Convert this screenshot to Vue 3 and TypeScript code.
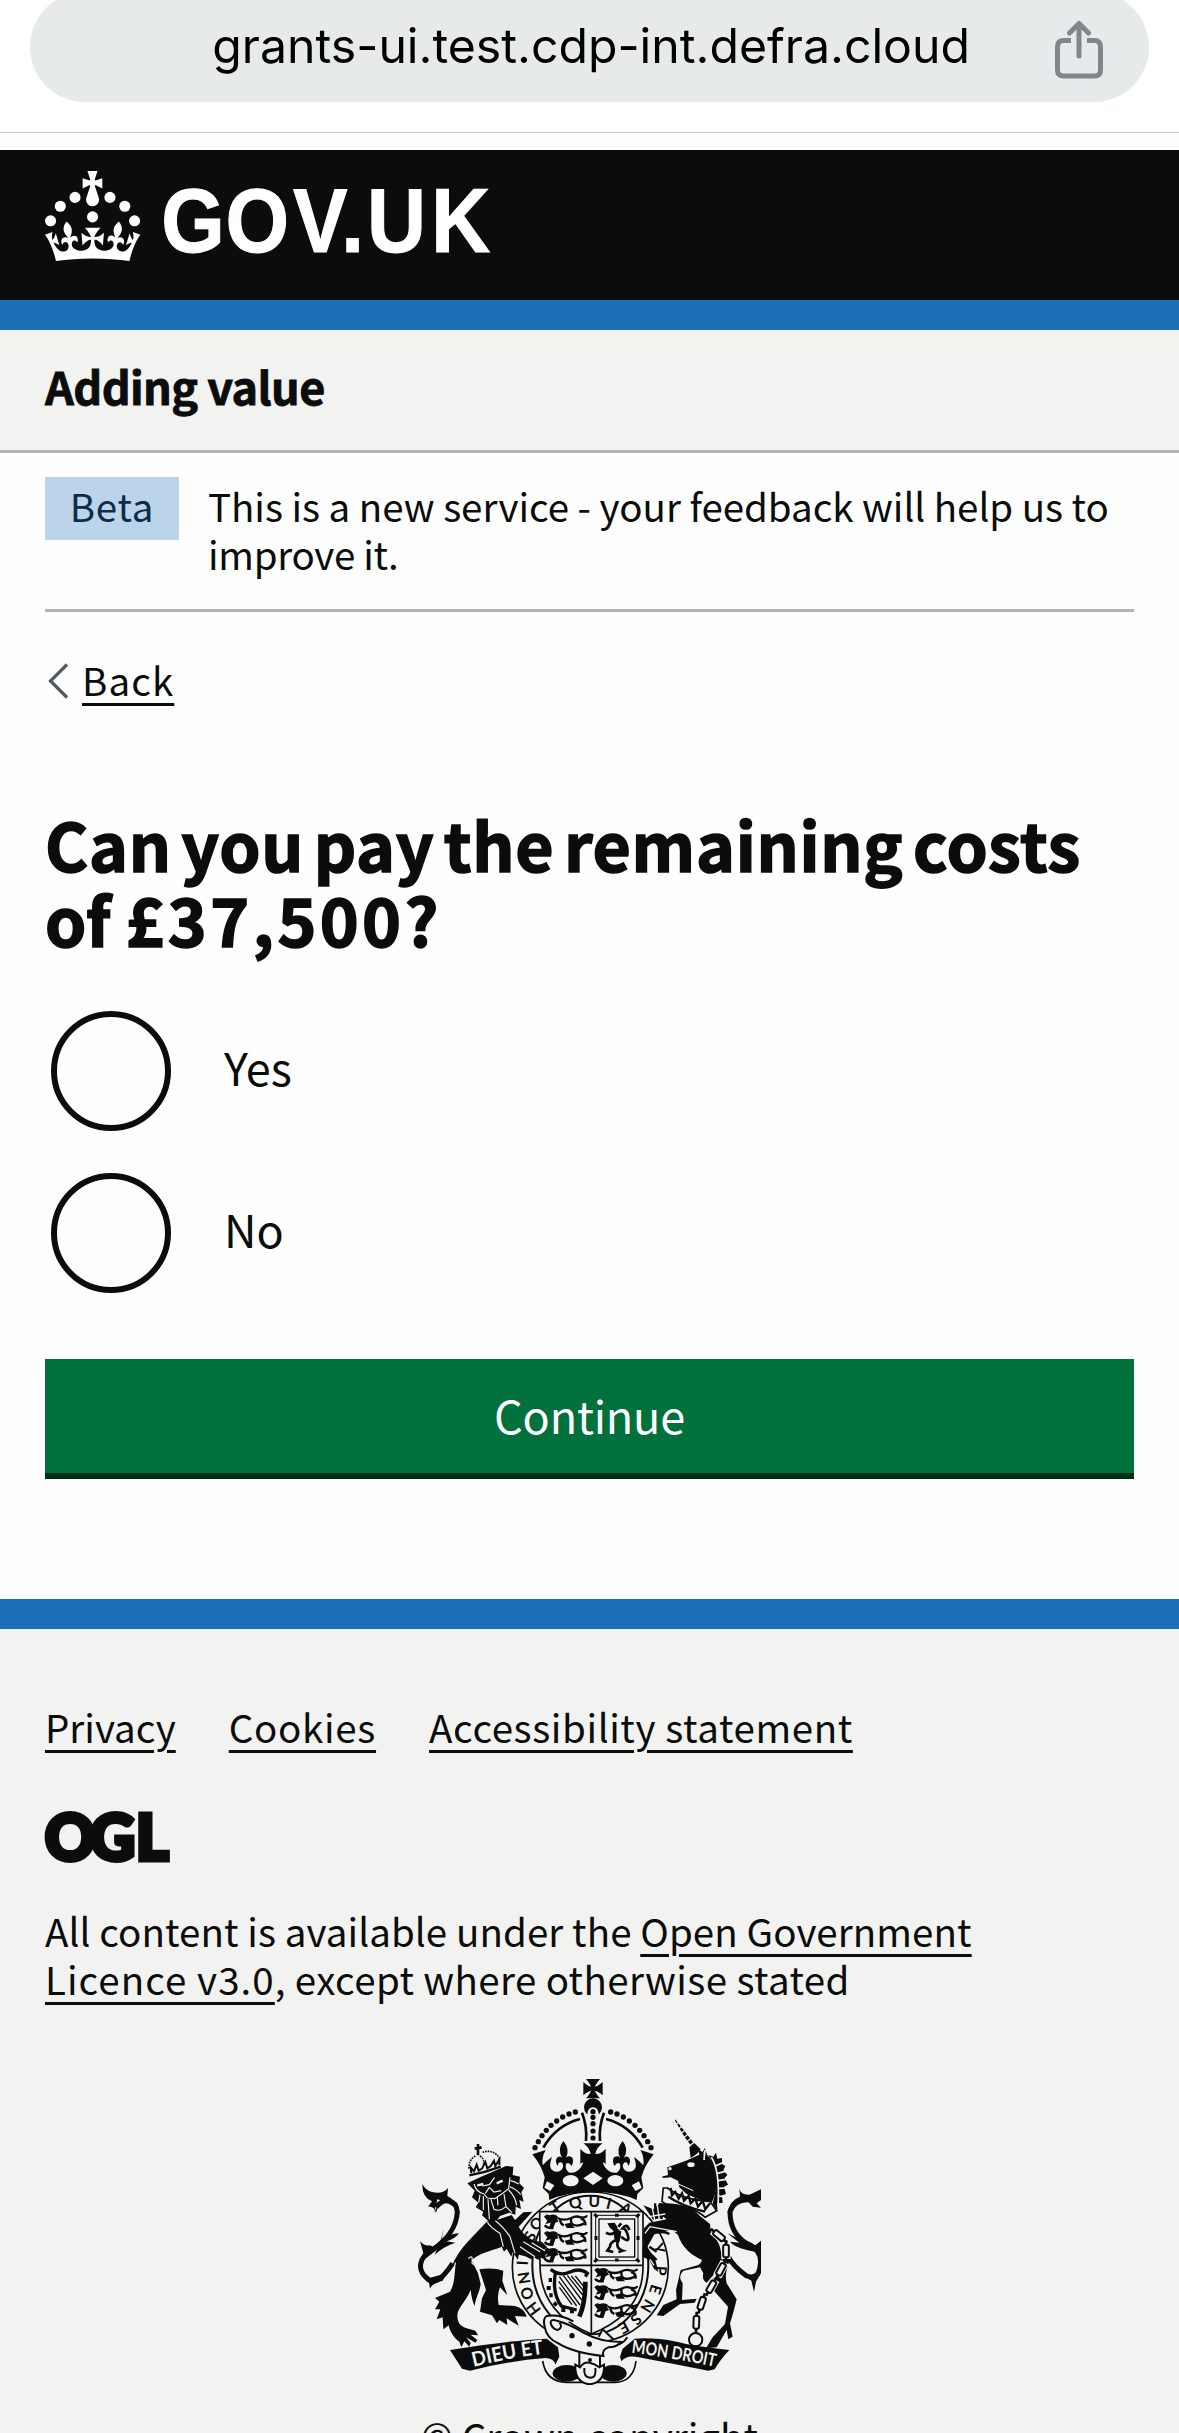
<script setup lang="ts">
interface Glyph { c: string; x: number; y: number; r: number }

const options: string[] = ['Yes', 'No']
const footerLinks = [
  { label: 'Privacy', cls: 'l1' },
  { label: 'Cookies', cls: 'l2' },
  { label: 'Accessibility statement', cls: 'l3' },
]

// Letters of the garter motto that stay visible around the shield
const motto: Glyph[] = [
  { c: 'H', x: 400, y: 746, r: -127 },
  { c: 'O', x: 381, y: 700, r: -111 },
  { c: 'N', x: 372, y: 654, r: -99 },
  { c: 'I', x: 367, y: 609, r: -87 },
  { c: 'S', x: 390, y: 529, r: -62 },
  { c: 'O', x: 409, y: 491, r: -54 },
  { c: 'T', x: 465, y: 441, r: -33 },
  { c: 'Q', x: 526, y: 428, r: -12 },
  { c: 'U', x: 583, y: 424, r: 2 },
  { c: 'I', x: 627, y: 430, r: 15 },
  { c: 'A', x: 678, y: 446, r: 30 },
  { c: 'Y', x: 776, y: 566, r: 72 },
  { c: 'P', x: 783, y: 632, r: 92 },
  { c: 'E', x: 767, y: 688, r: 107 },
  { c: 'N', x: 743, y: 738, r: 121 },
  { c: 'S', x: 708, y: 778, r: 138 },
  { c: 'E', x: 672, y: 803, r: 152 },
]
const pearls = [[526, 156], [507, 162], [488, 171], [470, 183], [453, 196], [439, 211], [426, 227], [415, 245], [405, 263]]
const lionRows = [[430, 462], [430, 512], [430, 562], [581, 622], [581, 674], [581, 728]]
const chain = [[957, 527, -50], [978, 573, 0], [963, 628, 28], [934, 680, 30], [905, 730, 18], [889, 787, 2]]
</script>

<template>
  <div class="page">
    <div class="browser">
      <div class="pill">
        <span class="url">grants-ui.test.cdp-int.defra.cloud</span>
        <svg class="share" viewBox="0 0 50 60" width="50" height="60" fill="none" stroke="#80868b" stroke-width="5" stroke-linecap="round" stroke-linejoin="round">
          <path d="M17 20.500H9.500Q3.500 20.500 3.500 27V50Q3.500 56 9.500 56H40.500Q46.500 56 46.500 50V27Q46.500 20.500 40.500 20.500H33" stroke-linecap="butt" />
          <path d="M25 36V4M15.500 13 25 3.500 34.500 13" />
        </svg>
      </div>
    </div>

    <header class="header">
      <svg viewBox="0 0 324 60" width="486" height="90" fill="#fff">
        <circle cx="20" cy="17.600" r="3.700" /><circle cx="10.200" cy="23.500" r="3.700" /><circle cx="3.700" cy="33.200" r="3.700" />
        <circle cx="31.700" cy="30.600" r="3.700" /><circle cx="43.300" cy="17.600" r="3.700" /><circle cx="53.200" cy="23.500" r="3.700" /><circle cx="59.700" cy="33.200" r="3.700" />
        <path d="M33.1,9.8c.2-.1.3-.3.5-.5l4.6,2.4v-6.8l-4.6,1.5c-.1-.2-.3-.3-.5-.5l1.9-5.9h-6.7l1.9,5.9c-.2.1-.3.3-.5.5l-4.6-1.5v6.8l4.6-2.4c.1.2.3.3.5.5l-2.6,8c-.9,2.8,1.2,5.7,4.1,5.7h0c3,0,5.1-2.9,4.1-5.7l-2.6-8ZM37,37.9s-3.4,3.8-4.1,6.1c2.2,0,4.2-.5,6.4-2.8l-.7,8.5c-2-2.8-4.4-4.1-5.7-3.8.1,3.1.5,6.7,5.8,7.2,3.7.3,6.7-1.5,7-3.8.4-2.6-2-4.3-3.7-1.6-1.4-4.5,2.4-6.1,4.9-3.2-1.9-4.5-1.8-7.7,2.4-10.9,3,4,2.6,7.3-1.2,11.1,2.4-1.3,6.2,0,4,4.6-1.2-2.8-3.7-2.2-4.2.2-.3,1.7.7,3.7,3,4.2,1.9.3,4.7-.9,7-5.9-1.3,0-2.4.7-3.9,1.7l2.4-8c.6,2.3,1.4,3.7,2.2,4.5.6-1.6.5-2.8,0-5.3l5,1.8c-2.6,3.6-5.2,8.7-7.3,17.5-7.4-1.1-15.7-1.7-24.5-1.7h0c-8.8,0-17.1.6-24.5,1.7-2.1-8.9-4.7-13.9-7.3-17.5l5-1.8c-.5,2.5-.6,3.7,0,5.3.8-.8,1.6-2.3,2.2-4.5l2.4,8c-1.5-1-2.6-1.7-3.9-1.7,2.3,5,5.2,6.2,7,5.9,2.3-.4,3.3-2.4,3-4.2-.5-2.4-3-3.1-4.2-.2-2.2-4.6,1.6-6,4-4.6-3.7-3.7-4.2-7.1-1.2-11.1,4.2,3.2,4.3,6.4,2.4,10.9,2.5-2.8,6.3-1.3,4.9,3.2-1.8-2.7-4.1-1-3.7,1.6.3,2.3,3.3,4.1,7,3.8,5.4-.5,5.7-4.2,5.8-7.2-1.3-.2-3.7,1-5.7,3.8l-.7-8.5c2.2,2.3,4.2,2.7,6.4,2.8-.7-2.3-4.1-6.1-4.1-6.1h10.600,0Z" />
        <text class="wordmark" transform="scale(.9 1)" y="54" x="86.200 133.700 183.700 219.500 238.500 286.200">GOV.UK</text>
      </svg>
    </header>

    <div class="service"><span>Adding value</span></div>

    <div class="wrap">
      <div class="phase">
        <strong class="tag">Beta</strong>
        <p><span class="p1">This is a new service - your feedback will help us to</span><br><span class="p2">improve it.</span></p>
      </div>

      <a class="back" href="#">
        <svg viewBox="0 0 22 36" width="22" height="36" fill="none" stroke="#505a5f" stroke-width="3.200"><path d="M20 1.500 3.500 18 20 34.500" /></svg>
        <span>Back</span>
      </a>

      <h1><span class="h1a">Can you pay the remaining costs</span><br><span>of <span class="sum">£37,500?</span></span></h1>

      <div class="radios">
        <label v-for="o in options" :key="o" class="radio"><i></i><span>{{ o }}</span></label>
      </div>

      <button class="button"><span>Continue</span></button>
    </div>

    <footer class="footer">
      <nav>
        <a v-for="l in footerLinks" :key="l.label" href="#" :class="l.cls">{{ l.label }}</a>
      </nav>
      <svg class="ogl" viewBox="0 0 124 52" width="124" height="52" fill="#0b0c0c">
        <text y="49" x="0 45 91">OGL</text>
      </svg>
      <p class="licence"><span class="c1">All content is available under the <a href="#">Open Government</a></span><br><span class="c2"><a class="v3" href="#">Licence v3.0</a>, except where otherwise stated</span></p>

      <svg class="arms" viewBox="54 57 1029 918" width="343" height="306" fill="#0b0c0c">
        <!-- garter -->
        <ellipse cx="571" cy="622" rx="234" ry="226" fill="#f2f2f0" stroke="#0b0c0c" stroke-width="5" />
        <ellipse cx="571" cy="615" rx="174" ry="208" fill="none" stroke="#0b0c0c" stroke-width="6" />
        <g class="motto">
          <text v-for="(g, i) in motto" :key="i" :transform="`translate(${g.x} ${g.y}) rotate(${g.r})`" dy=".36em">{{ g.c }}</text>
        </g>

        <!-- royal crown -->
        <path d="M558 57H600C592 66 586 76 585 80 590 80 600 74 608 66V106C600 98 590 93 585 92 586 97 592 106 600 115H558C566 106 572 97 573 92 568 93 558 98 550 106V66C558 74 568 80 573 80 572 76 566 66 558 57Z" />
        <circle cx="579" cy="142" r="27" />
        <path d="M562 250V166Q562 142 579 142T596 166V250Z" fill="#f2f2f0" />
        <circle v-for="y in [155, 172, 191, 213, 234]" :key="y" cx="579" :cy="y" r="7.800" />
        <g id="half-crown">
          <circle v-for="(p, i) in pearls" :key="i" :cx="p[0]" :cy="p[1]" r="8" />
          <path d="M430 263Q468 196 540 177M546 158Q562 200 558 243" fill="none" stroke="#0b0c0c" stroke-width="8" />
          <path d="M397 283 437 270Q424 292 428 316 438 304 456 290 446 318 454 328 468 342 484 330 494 318 486 308 474 304 474 318 462 304 472 292 482 286 487 294 470 268 490 243 512 268 497 294 502 284 516 292 524 304 514 318 506 304 498 312 494 330 508 338 536 342 550 308 546 306 541 312V266Q556 284 572 282 568 262 550 250H580V396Q500 396 448 420L446 402 428 384 434 352Q424 316 397 283Z" />
          <ellipse cx="512" cy="362" rx="24" ry="17" fill="#f2f2f0" />
          <path d="M441 364 463 376 451 393 433 383Z" fill="#f2f2f0" />
        </g>
        <use href="#half-crown" transform="translate(1158 0) scale(-1 1)" />
        <path d="M550 355 579 335 608 355 579 375Z" fill="#f2f2f0" />

        <!-- shield -->
        <path d="M419 455H729V620C729 710 680 780 574 822 470 780 421 710 420 616Z" fill="#f2f2f0" stroke="#0b0c0c" stroke-width="5" />
        <path d="M574 455V820M420 616H729" stroke="#0b0c0c" stroke-width="5" />
        <g v-for="(p, i) in lionRows" :key="i" :transform="`translate(${p[0]} ${p[1]})`">
          <path d="M2 8Q10-2 18 4 34-2 44 8L40 14 46 22 36 26 30 42 18 40 22 26 6 30 12 20Z" />
          <path d="M42 12Q62 22 84 12 98 4 112 10 130 12 130 4M50 18Q52 30 62 34M84 14Q80 28 92 33T124 28M112 14Q128 18 126 34M4 34Q12 44 30 42" fill="none" stroke="#0b0c0c" stroke-width="7" />
          <path d="M64 30 82 26 94 42 70 42Z" />
        </g>
        <g fill="none" stroke="#0b0c0c">
          <rect x="587" y="466" width="127" height="136" stroke-width="3" />
          <rect x="597" y="477" width="107" height="114" stroke-width="4" />
          <path d="M583 462 592 472M718 462 709 472M583 606 592 596M718 606 709 596M645 466H656M645 600H656M588 528V540M714 528V540" stroke-width="9" />
          <path d="M618 518Q632 528 646 516M645 505Q665 515 655 540T668 572L655 576M650 540Q630 546 630 560L622 572 640 576M664 530Q690 552 684 528T668 505Q680 488 688 510M655 500 664 490" stroke-width="8" />
        </g>
        <path d="M622 490 644 488 654 504 640 512 630 504ZM640 508 664 514 658 546 644 546Z" />
        <!-- harp -->
        <g fill="none" stroke="#0b0c0c">
          <path d="M452 628Q480 650 510 636T562 640L556 650M466 640Q456 700 484 738L530 750" stroke-width="10" />
          <path d="M556 665Q556 730 538 770" stroke-width="14" />
          <path d="M456 660H446M452 684H440M458 706H448M470 728 462 736M490 742V756M516 748V760" stroke-width="12" />
          <path d="M478 650 540 735M490 646 545 720M502 646 548 705M514 648 550 692M476 664 530 738M478 682 516 734M526 648 550 678" stroke-width="4" />
        </g>

        <!-- lion supporter -->
        <path d="M158 610C120 668 96 672 80 654 50 628 58 592 94 572 140 540 170 505 172 455 168 416 130 412 108 442" fill="none" stroke="#0b0c0c" stroke-width="15" />
        <path d="M67 373Q78 392 96 396 128 404 144 384L142 408Q165 418 176 450L160 440Q120 410 108 458 102 438 84 440L96 424Q66 412 67 373ZM102 460Q112 430 132 424L112 418ZM124 540Q150 520 177 520 166 536 140 544L166 548Q130 560 104 584L122 540 132 505ZM60 543Q74 560 90 556L112 568 84 590 58 610 70 580ZM85 655 90 686Q98 668 128 662L140 640Z" />
        <path d="M262 484C225 525 175 565 155 620L168 605C162 650 165 670 150 695L105 714 118 725 105 748 121 748 110 778 128 772 130 808 146 796C150 815 162 835 178 845L184 862 193 844 208 860 212 848 198 832 226 848 232 840 212 824 234 826 226 812 200 805C182 798 172 790 172 765 175 740 195 730 212 690 214 710 218 726 224 738 228 710 238 700 242 672L234 640 215 600 226 592C250 575 285 570 305 560L312 575 320 566 334 590 338 576 354 600 356 584Q380 588 394 598L400 590 415 600 420 592 438 600 436 586 444 578 430 570 442 562 425 545C400 545 372 530 356 500L397 455 370 457 345 480 335 465 290 480Z" />
        <path d="M238 628Q280 622 310 632L307 662 322 706 300 682Q290 705 296 735L345 738Q372 744 380 770L345 768 356 797 320 775 322 795 298 780 291 790 276 766 240 755 246 715 258 690Z" />
        <path d="M202 370 240 352 318 318 340 320 338 345 360 350 358 370 372 384 364 397 371 425 358 420 363 447 347 440 346 464 328 458 300 468 285 490 264 482 246 466 250 455 227 442 235 428 216 412 224 392Z" />
        <g fill="none" stroke="#f2f2f0" stroke-width="3.500">
          <path d="M222 372Q228 396 252 402L262 414 284 416 308 400 326 386 330 352M268 382 256 400M268 382 282 396 304 392M272 416 282 448Q300 456 318 440L312 402M292 412 294 436M240 404 236 428M250 408 250 450M264 418 268 478M326 390Q346 410 350 436M330 380Q350 388 362 404M332 362Q346 366 356 372M318 440 336 458M246 378 268 374 284 352M286 482Q310 500 330 530L345 580M262 486Q270 502 300 520L310 560M205 596Q220 580 216 610L236 625M370 545 420 575M360 560 405 590M395 548 435 572" />
          <path d="M232 376 250 372M290 370 308 362" stroke-width="7" />
        </g>
        <g fill="none" stroke="#0b0c0c">
          <path d="M208 346Q255 338 302 320" stroke-width="7" />
          <path d="M234 252V286M224 266 245 262" stroke-width="8" />
          <path d="M207 326Q205 298 228 287M300 296Q280 266 248 277M240 288Q255 298 250 316" stroke-width="5" stroke-dasharray="5 3" />
          <path d="M214 340 212 322 222 334 230 314 236 332 246 326 256 306 262 325 272 318 282 302 286 318 298 298V316" stroke-width="6" />
        </g>

        <!-- unicorn supporter -->
        <path d="M822 182 886 264" fill="none" stroke="#0b0c0c" stroke-width="11" stroke-dasharray="11 4" />
        <path d="M816 180 824 180 872 264 858 264Z" fill="#f2f2f0" />
        <path d="M785 350 804 345 802 322 822 315 858 302 898 284 894 268 908 276 914 264 922 286C952 315 958 390 935 428L910 424 860 402 838 382 834 362 812 352 790 354ZM868 262 884 250 902 268 890 282 872 294Z" />
        <path d="M925 285 940 290 948 278 952 296 966 294 966 312 976 318 970 330 982 345 974 354 984 374 972 380 978 402 966 406 968 428 952 430 952 455 938 430Q962 350 925 285Z" />
        <path d="M934 292Q960 330 954 440M946 318 968 308M952 340 976 334M954 362 978 358M954 385 978 384M952 408 972 410M915 270 912 300" fill="none" stroke="#f2f2f0" stroke-width="5" />
        <ellipse cx="873" cy="314" rx="11" ry="7" fill="#f2f2f0" /><circle cx="810" cy="326" r="5" fill="#f2f2f0" />
        <path d="M912 276 914 300M835 372 880 392" fill="none" stroke="#f2f2f0" stroke-width="3" />
        <path d="M790 384 802 384Q850 420 930 424L950 452 916 472Q880 440 800 434L786 424Z" fill="#f2f2f0" stroke="#0b0c0c" stroke-width="5" />
        <path d="M812 384 816 406 826 396 836 416 846 400 852 422 866 408 872 430 886 416 894 440 908 422 916 448 930 430M805 410Q850 440 915 455" fill="none" stroke="#0b0c0c" stroke-width="7" />
        <path d="M730 436 760 448 780 430Q860 425 900 468L930 492Q930 520 950 540 964 560 966 600L945 640 920 668Q905 660 910 640L900 622 850 632Q832 650 848 670L846 720 890 716 884 728 840 732 790 768 770 766 790 735 830 718 828 690 842 630 895 615Q905 608 906 600 850 575 834 525L816 510 765 520 742 560 766 600 775 636 762 626 748 600 728 590 732 505 748 488 800 478 790 470 760 480Z" />
        <path d="M990 600Q972 640 980 670L1010 718Q1000 760 990 790L998 830 985 838 980 810 950 862 918 865 938 832 975 792 984 740 940 690 925 668 960 640 970 585Z" />
        <path d="M985 590Q1000 620 1040 648 1075 660 1080 620 1090 570 1040 550 990 520 990 455 1005 415 1052 420" fill="none" stroke="#0b0c0c" stroke-width="15" />
        <path d="M1018 384Q1020 405 1048 404L1083 388V420L1070 430 1083 443 1058 440 1040 420Q1000 430 982 460 990 420 1020 410ZM982 520 1030 542 1060 560 1083 542V580L1040 570Q1000 560 990 545L1018 548ZM1020 640 1054 662 1062 696 1068 665 1083 640 1060 650Z" />
        <path d="M748 560 770 575M750 580 770 600M752 522Q790 510 808 522M765 430 768 470 788 474M780 430V456M762 456 792 452" fill="none" stroke="#0b0c0c" stroke-width="7" />
        <path d="M756 440 764 480M772 436 778 478M746 470 796 462M735 520 750 500 830 515M750 598 762 616" fill="none" stroke="#f2f2f0" stroke-width="4" />
        <g fill="#f2f2f0" stroke="#0b0c0c" stroke-width="6">
          <g v-for="(k, i) in chain" :key="i" :transform="`translate(${k[0]} ${k[1]}) rotate(${k[2]})`">
            <path d="M-14-24H14V24H-14ZM-3-30H3V32H-3Z" stroke="none" />
            <path d="M0-32V-14M0 14V32" stroke-width="8" />
            <rect x="-8.500" y="-19" width="17" height="38" rx="6" />
          </g>
          <circle cx="887" cy="839" r="20" />
        </g>

        <!-- motto ribbon -->
        <path d="M150 870Q320 842 440 836L474 862 478 890 466 914Q462 894 436 894 330 902 210 932L186 926Z" />
        <path d="M988 870Q880 858 830 845 760 832 704 836L668 866 660 890 664 904Q680 884 716 892 820 912 925 932L944 928Q960 900 988 870Z" />
        <path d="M428 903Q438 966 500 967H645Q700 966 708 903" fill="none" stroke="#0b0c0c" stroke-width="5" />
        <ellipse cx="500" cy="940" rx="42" ry="25" /><ellipse cx="640" cy="940" rx="40" ry="25" />
        <g class="ribbon">
          <path id="rib-left" d="M221 920Q320 895 438 880" fill="none" />
          <path id="rib-right" d="M694 878Q820 894 952 922" fill="none" />
          <text><textPath href="#rib-left" textLength="214" lengthAdjust="spacingAndGlyphs">DIEU ET</textPath></text>
          <text class="small"><textPath href="#rib-right" textLength="254" lengthAdjust="spacingAndGlyphs">MON DROIT</textPath></text>
        </g>

        <!-- strap and buckle -->
        <g fill="#f2f2f0" stroke="#0b0c0c" stroke-width="6">
          <path d="M538 868H600V925H538Z" />
          <path d="M526 914 540 922Q552 905 568 908T598 922L612 914Q615 968 569 973 523 968 526 914Z" />
          <path d="M553 924Q550 952 570 953T586 924" fill="none" />
          <path d="M596 830 608 808 640 838M640 850Q664 860 682 832" />
          <path d="M520 784Q480 762 440 768 428 775 434 800 440 836 475 850 520 878 610 888 604 870 625 862 650 862 664 846 600 846 550 818 510 792 470 782 450 776 452 790 458 808 474 810 490 800 478 788 470 778" />
        </g>
        <circle cx="516" cy="827" r="8" /><circle cx="568" cy="852" r="8" /><circle cx="570" cy="900" r="6" />
      </svg>

      <a class="copyright" href="#">© Crown copyright</a>
    </footer>
  </div>
</template>

<style>
html, body { margin: 0; background: #fff; overflow: hidden; }
</style>

<style scoped>
.page { width: 1179px; height: 2433px; overflow: hidden; display: flex; flex-direction: column; background: #fefefe; color: #0b0c0c; font-family: "Noto Sans CJK JP", "Noto Sans", sans-serif; font-size: 38.5px; line-height: 48px; }
p, h1 { margin: 0; }
a { color: inherit; text-decoration: underline; text-decoration-thickness: 3px; text-underline-offset: 7px; white-space: nowrap; }
span { white-space: nowrap; }
.browser { height: 132px; flex: none; overflow: hidden; border-bottom: 1px solid #c8c9ca; background: #fff; }
.pill { height: 110px; margin: -8px 30px 0; border-radius: 55px; background: #e6eaeb; display: flex; justify-content: flex-end; align-items: center; }
.url { font-family: Inter, "Liberation Sans", sans-serif; font-size: 48.2px; line-height: 60px; color: #000; margin-right: 84px; padding-bottom: 2px; }
.share { margin: 6px 45px 0 0; flex: none; }
.header { flex: none; height: 129px; margin-top: 17px; padding: 21px 45px 0; background: #0b0c0c; border-bottom: 30px solid #1d70b8; }
.header svg { display: block; overflow: visible; }
.wordmark { font-family: "Liberation Sans", Arial, sans-serif; font-weight: 700; font-size: 60.500px; stroke: #fff; stroke-width: .7px; }
.service { flex: none; height: 120px; padding: 0 45px; display: flex; align-items: center; background: #f2f2f0; border-bottom: 3px solid #b1b4b6; font-size: 45px; font-weight: 700; letter-spacing: -.6px; -webkit-text-stroke: .8px #0b0c0c; }
.service span { padding-bottom: 9px; }
.wrap { padding: 0 45px; flex: none; height: 1146px; display: flex; flex-direction: column; }
.phase { display: flex; align-items: flex-start; gap: 29px; padding: 24px 0 28px; height: 104px; border-bottom: 3px solid #b1b4b6; }
.tag { width: 134px; height: 63px; line-height: 56px; text-align: center; font-weight: 400; color: #0c2d4a; background: #bbd4ea; flex: none; letter-spacing: .7px; }
.phase p { padding-top: 4px; }
.p1 { letter-spacing: -.04px; }
.p2 { letter-spacing: -.3px; }
.back { align-self: flex-start; display: flex; align-items: center; gap: 13px; margin: 43px 0 0 2px; text-decoration: none; }
.back svg { margin-top: 4px; }
.back span { text-decoration: underline; text-decoration-thickness: 3px; text-underline-offset: 7px; letter-spacing: 1.1px; }
h1 { font-size: 66px; line-height: 75px; font-weight: 700; margin-top: 103px; -webkit-text-stroke: 1.6px #0b0c0c; }
.h1a { letter-spacing: .7px; word-spacing: -6.1px; }
.sum { letter-spacing: 3.4px; }
.radios { display: flex; flex-direction: column; gap: 42px; margin: 55px 0 0 6px; }
.radio { display: flex; align-items: center; gap: 53px; font-size: 45px; }
.radio span { padding-bottom: 9px; }
.radio i { width: 108px; height: 108px; border: 6px solid #0b0c0c; border-radius: 50%; }
.button { margin: 66px 0 0; padding: 0 0 3px; border: 0; height: 114px; width: 100%; background: #00703c; box-shadow: 0 6px 0 #002d18; color: #fff; font: inherit; font-size: 45px; letter-spacing: -.2px; }
.footer { flex: 1; min-height: 0; display: flex; flex-direction: column; align-items: flex-start; border-top: 30px solid #1d70b8; background: #f2f2f0; padding: 73px 45px 0; }
nav { display: flex; gap: 53px; }
.l2 { letter-spacing: .7px; }
.l3 { letter-spacing: .6px; }
.ogl { margin-top: 61px; flex: none; overflow: visible; }
.ogl text { font-family: Lato, Inter, sans-serif; font-weight: 900; font-size: 62px; stroke: #0b0c0c; stroke-width: 5px; }
.licence { margin-top: 43px; }
.c1 { letter-spacing: .08px; }
.c2 { letter-spacing: .38px; }
.v3 { letter-spacing: 1.05px; }
.arms { align-self: center; flex: none; margin-top: 77px; overflow: hidden; }
.motto text { font-family: Lato, sans-serif; font-size: 47px; font-weight: 700; text-anchor: middle; }
.ribbon text { font-family: Lato, sans-serif; font-size: 60px; font-weight: 700; fill: #f2f2f0; }
.ribbon .small { font-size: 54px; }
.copyright { align-self: center; margin-top: 26px; }
</style>
